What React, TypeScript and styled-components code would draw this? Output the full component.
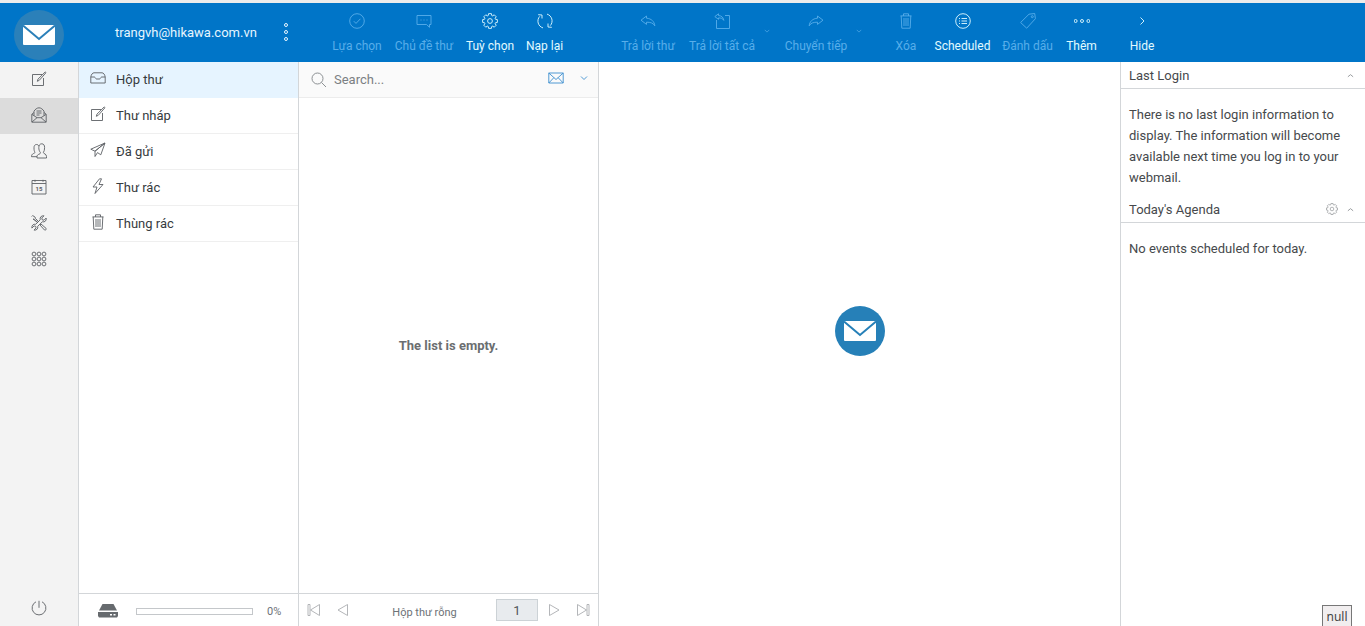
import React from "react";
import styled, { createGlobalStyle } from "styled-components";

const GlobalStyle = createGlobalStyle`
  * { box-sizing: border-box; }
  body {
    margin: 0;
    font-family: Roboto, "Noto Sans", sans-serif;
    font-size: 13px;
    color: #3c4043;
    background: #fff;
  }
  button, input { font-family: inherit; color: inherit; }
  button { border: 0; background: none; padding: 0; cursor: pointer; }
  button:disabled { cursor: default; }
  h2, p, ul { margin: 0; padding: 0; font-weight: 400; }
`;

const line = "#d3d6d9";

const Page = styled.div`
  display: flex;
  flex-direction: column;
  height: 100vh;
  border-top: 3px solid #ececec;
`;

const Header = styled.header`
  display: flex;
  flex: none;
  height: 59px;
  background: #0075c8;
  color: #fff;
`;

const Brand = styled.a`
  display: flex;
  align-items: center;
  justify-content: center;
  width: 78px;
  padding-top: 4px;
`;

const Account = styled.div`
  display: flex;
  align-items: center;
  justify-content: space-between;
  width: 212px;
  padding-left: 37px;
  color: #e6f6ff;
`;

const ToolGroup = styled.div<{ $start: number; $gap?: number }>`
  display: flex;
  align-items: flex-start;
  gap: ${(p) => p.$gap ?? 12}px;
  margin-left: ${(p) => p.$start}px;
`;

const ToolButton = styled.button<{ $width: number }>`
  display: flex;
  flex-direction: column;
  align-items: center;
  gap: 8px;
  width: ${(p) => p.$width}px;
  padding-top: 10px;
  font-size: 12px;
  line-height: 18px;
  white-space: nowrap;
  color: #e2fbff;
  &:disabled { color: #58aeea; }
`;

const ToolMenu = styled.button`
  width: 8px;
  padding-top: 25px;
  line-height: 0;
  color: #58aeea;
`;

const Columns = styled.div`
  display: flex;
  flex: 1;
  min-height: 0;
`;

const Rail = styled.nav`
  display: flex;
  flex-direction: column;
  flex: none;
  width: 79px;
  background: #f3f3f3;
  border-right: 1px solid ${line};
`;

const RailButton = styled.button<{ $active?: boolean; $last?: boolean }>`
  display: flex;
  align-items: center;
  justify-content: center;
  height: 36px;
  padding-bottom: ${(p) => (p.$last ? 0 : 3)}px;
  margin-top: ${(p) => (p.$last ? "auto" : "0")};
  color: #5c6064;
  background: ${(p) => (p.$active ? "#dcdcdc" : "transparent")};
`;

const Panel = styled.section<{ $width: number }>`
  display: flex;
  flex-direction: column;
  flex: none;
  width: ${(p) => p.$width}px;
  border-right: 1px solid ${line};
`;

const FolderList = styled.ul`
  flex: 1;
  list-style: none;
`;

const Folder = styled.a<{ $active?: boolean }>`
  display: flex;
  align-items: center;
  gap: 10px;
  height: 36px;
  padding: 0 12px 1px 11px;
  border-bottom: 1px solid ${(p) => (p.$active ? "#e6f4ff" : "#efefef")};
  background: ${(p) => (p.$active ? "#e6f4ff" : "#fff")};
  color: #363b40;
  text-decoration: none;
  svg { margin-bottom: 2px; color: #5c6064; }
`;

const Footer = styled.footer`
  display: flex;
  align-items: center;
  flex: none;
  height: 33px;
  border-top: 1px solid ${line};
  color: #6d7277;
  font-size: 11px;
`;

const Quota = styled(Footer)`
  gap: 14px;
  padding: 2px 0 0 18px;
`;

const QuotaBar = styled.div`
  width: 117px;
  height: 7px;
  margin-left: 3px;
  border: 1px solid #c4c7ca;
`;

const SearchBar = styled.div`
  display: flex;
  align-items: center;
  flex: none;
  height: 36px;
  padding: 0 10px 0 12px;
  border-bottom: 1px solid #ececec;
  background: #fafafa;
  color: #808488;
`;

const SearchInput = styled.input`
  flex: 1;
  min-width: 0;
  margin-left: 7px;
  padding: 0;
  border: 0;
  outline: 0;
  background: none;
  font-size: 13px;
  &::placeholder { color: #7b7f83; opacity: 1; }
`;

const SearchButton = styled.button`
  margin-left: 16px;
  padding-bottom: 3px;
  line-height: 0;
  color: #3d8fcf;
`;

const EmptyNote = styled.div`
  display: flex;
  flex: 1;
  align-items: center;
  justify-content: center;
  color: #6b6e70;
  font-size: 13px;
  font-weight: 700;
`;

const Pager = styled(Footer)`
  padding: 0 7px;
`;

const PageStep = styled.button<{ $gap?: number }>`
  margin-left: ${(p) => p.$gap ?? 0}px;
  line-height: 0;
  color: #abaeb1;
`;

const PageStatus = styled.span`
  flex: 1;
  padding: 4px 0 0 2px;
  text-align: center;
`;

const PageInput = styled.input`
  width: 42px;
  height: 22px;
  padding: 0;
  border: 1px solid #ccd2d6;
  background: #e8ebee;
  color: #50555a;
  font-size: 13px;
  text-align: center;
`;

const Preview = styled.main`
  display: flex;
  flex: 1;
  align-items: center;
  justify-content: center;
  min-width: 0;
  padding-bottom: 26px;
`;

const Aside = styled.aside`
  flex: none;
  width: 245px;
  border-left: 1px solid ${line};
`;

const AsideHead = styled.div`
  display: flex;
  align-items: center;
  gap: 9px;
  height: 27px;
  padding: 0 11px 0 8px;
  border-bottom: 1px solid ${line};
  color: #8d9093;
`;

const AsideTitle = styled.h2`
  flex: 1;
  font-size: 13px;
  color: #46494c;
`;

const AsideText = styled.p`
  padding: 15px 8px 8px;
  font-size: 13px;
  line-height: 21px;
  color: #46494c;
`;

const IconButton = styled.button`
  line-height: 0;
`;

const StatusTip = styled.div`
  position: fixed;
  right: 13px;
  bottom: 0;
  width: 30px;
  height: 21px;
  border: 1px solid #777;
  border-bottom: 0;
  background: #f1eeef;
  color: #444;
  font-family: "Noto Sans", sans-serif;
  font-size: 12px;
  line-height: 21px;
  text-align: center;
`;

const gearPath = (() => {
  const steps: string[] = [];
  for (let i = 0; i < 8; i++) {
    const a = (i * Math.PI) / 4;
    const pt = (r: number, d: number) =>
      `${(8 + r * Math.cos(a + d)).toFixed(2)} ${(8 + r * Math.sin(a + d)).toFixed(2)}`;
    steps.push(`${i ? "L" : "M"}${pt(5.8, -0.3)} L${pt(7.5, -0.19)} L${pt(7.5, 0.19)} L${pt(5.8, 0.3)}`);
  }
  return steps.join(" ") + "Z";
})();

const icons: Record<string, React.ReactNode> = {
  check: <><circle cx="8" cy="8" r="7.3" /><path d="M4.8 8.2 7 10.4l4.4-4.600" /></>,
  chat: <><path d="M1 2.500h14v9h-1.500v2.800L10.500 11.500H1z" /><path d="M4.500 7h1M7.500 7h1M10.500 7h1" /></>,
  gear: <><path d={gearPath} strokeLinejoin="round" /><circle cx="8" cy="8" r="2.400" /></>,
  reload: <><path d="M6 14.900A7.100 7.100 0 0 1 2.700 3.400M10 1.100a7.100 7.100 0 0 1 3.300 11.500" /><path d="M1.200 1.700 5 2v3.500M14.800 14.300 11 14v-3.500" /></>,
  reply: <path d="M6.500 3 1 7.200l5.500 4.200V9.200c4 0 6.700.7 8.300 3.600C14.400 8.600 11.500 5.600 6.500 5.200z" />,
  replyAll: <><path d="M2.500 7v8.500h13V2.500H11" /><path d="M4.500.8.8 3.600l3.700 2.700V4.900c2.500 0 4.300.5 5.300 2.500-.2-2.800-2.200-4.600-5.300-4.900z" /></>,
  forward: <path d="M9.500 3 15 7.200l-5.500 4.200V9.200c-4 0-6.700.7-8.300 3.600C1.600 8.600 4.500 5.600 9.500 5.200z" />,
  trash: <path d="M2.500 2.900h11M5.500 2.900V.8h5v2.100M3.200 2.900l.6 12.300h8.400l.6-12.300M6 5v8M8 5v8M10 5v8" />,
  list: <><circle cx="8" cy="8" r="7.300" /><path d="M6.500 5.500h5.500M6.500 8h5.500M6.500 10.500h5.500M4 5.500h1M4 8h1M4 10.500h1" /></>,
  tag: <><path d="M.6 9.500 9 1.200l5.700-.7.700 5.200-8.700 9.500z" /><circle cx="12.300" cy="3.700" r="1" /></>,
  dots: <><circle cx="1.600" cy="8" r="1.500" /><circle cx="8" cy="8" r="1.500" /><circle cx="14.400" cy="8" r="1.500" /></>,
  right: <path d="m6.500 4.500 3.500 3.500-3.500 3.500" />,
  compose: <><path d="M11 3.500H1.500v11h11V7" /><path d="m6.300 10.300.7-2.200L14.200.9l.8.800L8.300 9.300z" /></>,
  mail: <><path d="M3 5.500.8 7.200v8h14.400v-8L13 5.500M1 15l5-4.300h4l5 4.300M1 7.400l5 3.300M15 7.400l-5 3.300" /><path d="M3 8.600V4.200C4 2.500 6 .8 8 .8s4 1.700 5 3.400v4.400M5.500 4h5M5.500 6h5M5.500 8h3" /></>,
  people: <><path d="M8.200 11.200c.8-.2 1.200-.8 1.200-1.700C8.300 8.300 7.800 6.500 7.800 4.500 7.800 2.300 8.900.8 10.800.8s2.800 1.500 2.800 3.700c0 2-.4 3.800-1.200 5 0 1.500 3.100 1.100 3.100 4v1.500H6v-1.500c0-1 .8-2 2.200-2.300z" /><path d="M7.800 2.800c-.6-.9-1.200-1.300-2.200-1.300C3.700 1.500 3 3 3 4.800c0 2 .2 3.400 1 4.400 0 1.500-3.500.8-3.500 4.500H6" /></>,
  calendar: <><path d="M1 1.500h14v13.500H1zM1 4.500h14M4 .8v2M12 .8v2" /><text x="8" y="12" textAnchor="middle" fontSize="6" fontWeight="700" fill="currentColor" stroke="none">15</text></>,
  tools: <><path d="m.7 1.500.9-.9L4 2l.5 1.500 3.300 3.300M6.900 7.700 3.500 4.400 2 4z" /><path d="m9 10 1-1 5.100 4.400c.6.9-.7 2.200-1.600 1.600z" /><path d="M13 .8 10.800 3l.4 1.800 1.800.4L15.200 3c.5 2.700-1.600 4.500-3.900 3.800L6.700 11.300c.7 2.300-1.200 4.300-3.700 3.800l2.100-2.200-.4-1.600-1.600-.4L.9 13.100C.4 10.500 2.400 8.700 4.700 9.300l4.500-4.500C8.500 2.400 10.400.4 13 .8z" /></>,
  apps: <>{[3, 8, 13].map((y) => [3, 8, 13].map((x) => <circle key={`${x}-${y}`} cx={x} cy={y} r="1.900" />))}</>,
  power: <path d="M8 .8v7M5 1.800a6.900 6.900 0 1 0 6 0" />,
  inbox: <path d="M.8 7C1.200 4.500 2.500 2.800 4 2.800h8c1.500 0 2.800 1.700 3.200 4.200v6H.8V7h3.700c.5 0 1.200 2 2 2h3c.8 0 1.500-2 2-2h3.700" />,
  send: <path d="M15 1 .8 7.200 5 9.200 15 1l-4.200 11.800-3.300-2.200M15 1 5 9.200v5.300l2.500-3.900" />,
  bolt: <path d="M9.500.8 3 9h4l-2 6.500L13 6.500H9L11.500.8z" />,
  search: <><circle cx="6.500" cy="6.500" r="5.500" /><path d="m10.500 10.500 4.500 4.500" /></>,
  envelope: <path d="M.8 3h14.400v10H.8zM.8 3 8 9.500 15.200 3M.8 13l5-5.300M15.200 13l-5-5.300" />,
  down: <path d="m2 5 6 6 6-6" strokeWidth="1.800" />,
  up: <path d="m2 11 6-5 6 5" strokeWidth="2" />,
  first: <path d="M2 2.500h2v11H2zM13.500 2.500v11L4.500 8z" />,
  prev: <path d="M12.500 2.500v11L3 8z" />,
  next: <path d="M3.500 2.500v11L13 8z" />,
  last: <path d="M12 2.500h2v11h-2zM2.500 2.500v11l9-5.500z" />,
};

function Icon({ name, size = 16 }: { name: string; size?: number }) {
  return (
    <svg width={size} height={size} viewBox="0 0 16 16" fill="none" stroke="currentColor" strokeWidth="0.900" aria-hidden="true">
      {icons[name]}
    </svg>
  );
}

function Logo({ fill }: { fill: string }) {
  return (
    <svg width="50" height="50" viewBox="0 0 50 50" role="img" aria-label="Webmail">
      <circle cx="25" cy="25" r="25" fill={fill} />
      <rect x="9" y="15" width="32" height="20" rx="1" fill="#fff" />
      <path d="M9 15.500 25 29 41 15.500" fill="none" stroke={fill} strokeWidth="2" />
    </svg>
  );
}

type ToolProps = { icon: string; label: string; width: number; disabled?: boolean };

function Tool({ icon, label, width, disabled }: ToolProps) {
  return (
    <ToolButton $width={width} disabled={disabled}>
      <Icon name={icon} />
      {label}
    </ToolButton>
  );
}

const folders = [
  { icon: "inbox", label: "Hộp thư" },
  { icon: "compose", label: "Thư nháp" },
  { icon: "send", label: "Đã gửi" },
  { icon: "bolt", label: "Thư rác" },
  { icon: "trash", label: "Thùng rác" },
];

const railItems = [
  { icon: "compose", label: "Compose" },
  { icon: "mail", label: "Mail" },
  { icon: "people", label: "Contacts" },
  { icon: "calendar", label: "Calendar" },
  { icon: "tools", label: "Settings" },
  { icon: "apps", label: "Apps" },
];

export default function App() {
  return (
    <Page>
      <GlobalStyle />
      <Header>
        <Brand href="#"><Logo fill="#2b80b9" /></Brand>
        <Account>
          <span>trangvh@hikawa.com.vn</span>
          <IconButton aria-label="Account menu">
            <svg width="8" height="20" viewBox="0 0 8 20" fill="none" stroke="currentColor">
              <circle cx="4" cy="2" r="1.500" /><circle cx="4" cy="9" r="1.500" /><circle cx="4" cy="16" r="1.500" />
            </svg>
          </IconButton>
        </Account>
        <ToolGroup $start={43} $gap={13}>
          <Tool icon="check" label="Lựa chọn" width={48} disabled />
          <Tool icon="chat" label="Chủ đề thư" width={60} disabled />
          <Tool icon="gear" label="Tuỳ chọn" width={46} />
          <Tool icon="reload" label="Nạp lại" width={37} />
        </ToolGroup>
        <ToolGroup $start={57}>
          <Tool icon="reply" label="Trả lời thư" width={56} disabled />
          <Tool icon="replyAll" label="Trả lời tất cả" width={68} disabled />
        </ToolGroup>
        <ToolGroup $start={7} $gap={13}>
          <ToolMenu disabled aria-label="Reply options"><Icon name="down" size={6} /></ToolMenu>
          <Tool icon="forward" label="Chuyển tiếp" width={64} disabled />
        </ToolGroup>
        <ToolGroup $start={7}>
          <ToolMenu disabled aria-label="Forward options"><Icon name="down" size={6} /></ToolMenu>
        </ToolGroup>
        <ToolGroup $start={33} $gap={19}>
          <Tool icon="trash" label="Xóa" width={20} disabled />
          <Tool icon="list" label="Scheduled" width={55} />
        </ToolGroup>
        <ToolGroup $start={12} $gap={13}>
          <Tool icon="tag" label="Đánh dấu" width={51} disabled />
          <Tool icon="dots" label="Thêm" width={31} />
        </ToolGroup>
        <ToolGroup $start={33}>
          <Tool icon="right" label="Hide" width={24} />
        </ToolGroup>
      </Header>
      <Columns>
        <Rail>
          {railItems.map((item) => (
            <RailButton key={item.icon} aria-label={item.label} $active={item.icon === "mail"}>
              <Icon name={item.icon} />
            </RailButton>
          ))}
          <RailButton $last aria-label="Log out"><Icon name="power" /></RailButton>
        </Rail>
        <Panel $width={220}>
          <FolderList>
            {folders.map((folder) => (
              <li key={folder.label}>
                <Folder href="#" $active={folder.icon === "inbox"}>
                  <Icon name={folder.icon} />
                  {folder.label}
                </Folder>
              </li>
            ))}
          </FolderList>
          <Quota>
            <svg width="22" height="16" viewBox="0 0 22 16" fill="#666a6e" aria-hidden="true">
              <path d="M5.500 1h11l3.500 6.500H2z" />
              <path fillRule="evenodd" d="M1 9h20v4l-1 1.500H2L1 13zM13 11v1.500h2V11zM16.500 11v1.500h2V11z" />
            </svg>
            <QuotaBar />
            <span>0%</span>
          </Quota>
        </Panel>
        <Panel $width={300}>
          <SearchBar>
            <Icon name="search" />
            <SearchInput aria-label="Search" placeholder="Search..." />
            <SearchButton aria-label="Unread"><Icon name="envelope" /></SearchButton>
            <SearchButton aria-label="Search options"><Icon name="down" size={8} /></SearchButton>
          </SearchBar>
          <EmptyNote>The list is empty.</EmptyNote>
          <Pager>
            <PageStep aria-label="First page"><Icon name="first" /></PageStep>
            <PageStep aria-label="Previous page" $gap={13}><Icon name="prev" /></PageStep>
            <PageStatus>Hộp thư rỗng</PageStatus>
            <PageInput aria-label="Page" defaultValue="1" />
            <PageStep aria-label="Next page" $gap={8}><Icon name="next" /></PageStep>
            <PageStep aria-label="Last page" $gap={13}><Icon name="last" /></PageStep>
          </Pager>
        </Panel>
        <Preview><Logo fill="#2680b8" /></Preview>
        <Aside>
          <AsideHead>
            <AsideTitle>Last Login</AsideTitle>
            <IconButton aria-label="Collapse last login"><Icon name="up" size={7} /></IconButton>
          </AsideHead>
          <AsideText>
            There is no last login information to display. The information will become available next time you log in to your webmail.
          </AsideText>
          <AsideHead>
            <AsideTitle>Today's Agenda</AsideTitle>
            <IconButton aria-label="Agenda settings"><Icon name="gear" size={12} /></IconButton>
            <IconButton aria-label="Collapse agenda"><Icon name="up" size={7} /></IconButton>
          </AsideHead>
          <AsideText>No events scheduled for today.</AsideText>
        </Aside>
      </Columns>
      <StatusTip>null</StatusTip>
    </Page>
  );
}
